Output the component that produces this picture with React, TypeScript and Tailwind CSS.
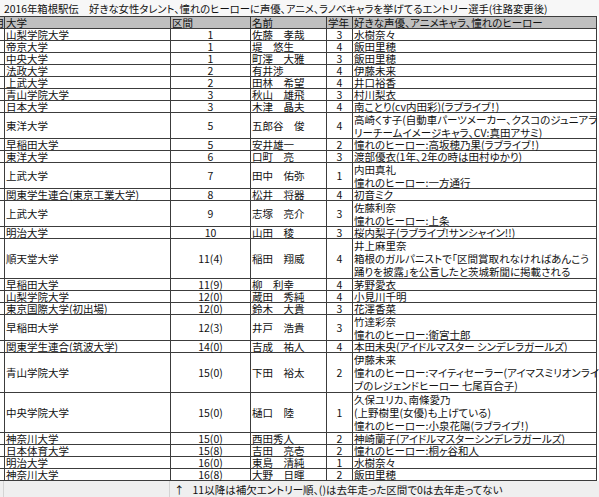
import React from 'react'

// ====== データ ======

interface Row {
  univ: string
  section: string
  name: string
  grade: string
  fav: string[]
}

const rows: Row[] = [
  { univ: '山梨学院大学', section: '1', name: '佐藤　孝哉', grade: '3', fav: ['水樹奈々'] },
  { univ: '帝京大学', section: '1', name: '堤　悠生', grade: '4', fav: ['飯田里穂'] },
  { univ: '中央大学', section: '1', name: '町澤　大雅', grade: '3', fav: ['飯田里穂'] },
  { univ: '法政大学', section: '2', name: '有井渉', grade: '4', fav: ['伊藤未来'] },
  { univ: '上武大学', section: '2', name: '田林　希望', grade: '4', fav: ['井口裕香'] },
  { univ: '青山学院大学', section: '3', name: '秋山　雄飛', grade: '3', fav: ['村川梨衣'] },
  { univ: '日本大学', section: '3', name: '木津　晶夫', grade: '4', fav: ['南ことり(cv内田彩)(ラブライブ！)'] },
  {
    univ: '東洋大学', section: '5', name: '五郎谷　俊', grade: '4',
    fav: ['高崎くす子(自動車パーツメーカー、クスコのジュニアラ', 'リーチームイメージキャラ、CV:真田アサミ)'],
  },
  { univ: '早稲田大学', section: '5', name: '安井雄一', grade: '2', fav: ['憧れのヒーロー:高坂穂乃果(ラブライブ！)'] },
  { univ: '東洋大学', section: '6', name: '口町　亮', grade: '3', fav: ['渡部優衣(1年、2年の時は田村ゆかり)'] },
  { univ: '上武大学', section: '7', name: '田中　佑弥', grade: '1', fav: ['内田真礼', '憧れのヒーロー:一方通行'] },
  { univ: '関東学生連合(東京工業大学)', section: '8', name: '松井　将器', grade: '4', fav: ['初音ミク'] },
  { univ: '上武大学', section: '9', name: '志塚　亮介', grade: '3', fav: ['佐藤利奈', '憧れのヒーロー:上条'] },
  { univ: '明治大学', section: '10', name: '山田　稜', grade: '3', fav: ['桜内梨子(ラブライブ!サンシャイン!!)'] },
  {
    univ: '順天堂大学', section: '11(4)', name: '稲田　翔威', grade: '4',
    fav: ['井上麻里奈', '箱根のガルパニストで「区間賞取れなければあんこう', '踊りを披露」を公言したと茨城新聞に掲載される'],
  },
  { univ: '早稲田大学', section: '11(9)', name: '柳　利幸', grade: '4', fav: ['茅野愛衣'] },
  { univ: '山梨学院大学', section: '12(0)', name: '蔵田　秀純', grade: '4', fav: ['小見川千明'] },
  { univ: '東京国際大学(初出場)', section: '12(0)', name: '鈴木　大貴', grade: '3', fav: ['花澤香菜'] },
  { univ: '早稲田大学', section: '12(3)', name: '井戸　浩貴', grade: '3', fav: ['竹達彩奈', '憧れのヒーロー:衛宮士郎'] },
  { univ: '関東学生連合(筑波大学)', section: '14(0)', name: '吉成　祐人', grade: '4', fav: ['本田未央(アイドルマスター シンデレラガールズ)'] },
  {
    univ: '青山学院大学', section: '15(0)', name: '下田　裕太', grade: '2',
    fav: ['伊藤未来', '憧れのヒーロー:マイティセーラー(アイマスミリオンライ', 'ブのレジェンドヒーロー 七尾百合子)'],
  },
  {
    univ: '中央学院大学', section: '15(0)', name: '樋口　陸', grade: '1',
    fav: ['久保ユリカ、南條愛乃', '(上野樹里(女優)も上げている)', '憧れのヒーロー:小泉花陽(ラブライブ！)'],
  },
  { univ: '神奈川大学', section: '15(0)', name: '西田秀人', grade: '2', fav: ['神崎蘭子(アイドルマスターシンデレラガールズ)'] },
  { univ: '日本体育大学', section: '15(8)', name: '吉田　亮壱', grade: '2', fav: ['憧れのヒーロー:桐ヶ谷和人'] },
  { univ: '明治大学', section: '16(0)', name: '東島　清純', grade: '1', fav: ['水樹奈々'] },
  { univ: '神奈川大学', section: '16(8)', name: '大野　日暉', grade: '2', fav: ['飯田里穂'] },
]

// 行の高さ（行数ごと）
const heights: Record<number, string> = {
  1: 'h-[11px]',
  2: 'h-[25px]',
  3: 'h-[39px]',
}

const font = "font-['Noto_Sans_CJK_JP',sans-serif] [font-feature-settings:'palt']"

function Cell({ h, className = '', children }: { h: string; className?: string; children?: React.ReactNode }) {
  return (
    <div className={`${h} flex items-center whitespace-nowrap bg-white ${className}`}>
      {children}
    </div>
  )
}

export default function App() {
  return (
    <div className={`w-[599px] h-[497px] overflow-hidden bg-white text-[10.5px] leading-[11px] text-[#111] ${font}`}>
      {/* タイトル行 */}
      <div className="flex h-[16px] items-center bg-[#f7f7f7] pl-[4px] text-[10.35px] whitespace-nowrap">
        2016年箱根駅伝　好きな女性タレント、憧れのヒーローに声優、アニメ、ラノベキャラを挙げてるエントリー選手(往路変更後)
      </div>

      {/* 表本体 */}
      <div className="grid w-[597px] grid-cols-[4px_165px_79px_75px_25px_243px] gap-px bg-[#3c3c3c] py-px pr-px">
        <div className="flex h-[11px] items-center justify-end overflow-hidden bg-[#bfbfbf]">
          <span className="shrink-0">用</span>
        </div>
        <div className="flex h-[11px] items-center bg-[#bfbfbf] pl-px">大学</div>
        <div className="flex h-[11px] items-center bg-[#bfbfbf] pl-px">区間</div>
        <div className="flex h-[11px] items-center bg-[#bfbfbf] pl-px">名前</div>
        <div className="flex h-[11px] items-center bg-[#bfbfbf] pl-px">学年</div>
        <div className="flex h-[11px] items-center bg-[#bfbfbf] pl-px">好きな声優、アニメキャラ、憧れのヒーロー</div>

        {rows.map((r, i) => {
          const h = heights[r.fav.length]
          return (
            <React.Fragment key={i}>
              <Cell h={h} />
              <Cell h={h} className="pl-px">{r.univ}</Cell>
              <Cell h={h} className="justify-center">{r.section}</Cell>
              <Cell h={h} className="pl-px">{r.name}</Cell>
              <Cell h={h} className="justify-center">{r.grade}</Cell>
              <div className={`${h} flex flex-col justify-center whitespace-nowrap bg-white pl-px ${r.fav.length > 1 ? 'leading-[13px]' : ''}`}>
                {r.fav.map((f, j) => (
                  <div key={j}>{f}</div>
                ))}
              </div>
            </React.Fragment>
          )
        })}
      </div>

      {/* 注記行 */}
      <div className="flex h-[16px] items-center bg-[#efefef] whitespace-nowrap">
        <div className="h-full w-[4px] border-r border-[#d4d4d4]" />
        <div className="h-full w-[166px] border-r border-[#d4d4d4]" />
        <div className="flex pl-[4px]">
          <span>↑</span>
          <span className="ml-[8px]">11以降は補欠エントリー順、()は去年走った区間で0は去年走ってない</span>
        </div>
      </div>
    </div>
  )
}
